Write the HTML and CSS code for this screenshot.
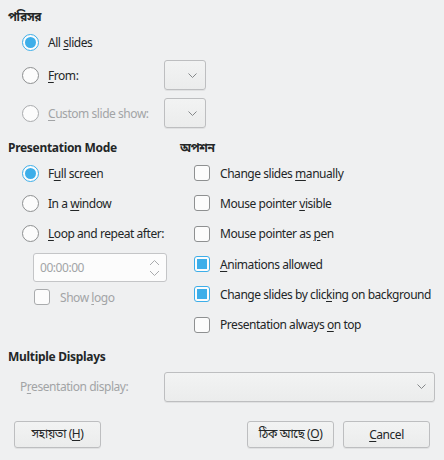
FILE: index.html
```html
<!DOCTYPE html>
<html>
<head>
<meta charset="utf-8">
<link rel="stylesheet" href="styles.css">
</head>
<body>
<div class="dialog">
  <div class="heading h-range">পরিসর</div>
  <div class="range">
    <div class="row r1">
      <span class="radio checked"></span><span class="label">All <u>s</u>lides</span>
    </div>
    <div class="row r2">
      <span class="radio"></span><span class="label"><u>F</u>rom:</span>
      <span class="combo small"><svg class="chev" viewBox="0 0 9 5"><path d="M0.5 0.5 L4.5 4.5 L8.5 0.5"/></svg></span>
    </div>
    <div class="row r3 disabled">
      <span class="radio"></span><span class="label"><u>C</u>ustom slide show:</span>
      <span class="combo small"><svg class="chev" viewBox="0 0 9 5"><path d="M0.5 0.5 L4.5 4.5 L8.5 0.5"/></svg></span>
    </div>
  </div>

  <div class="cols">
    <div class="col-left">
      <div class="heading">Presentation Mode</div>
      <div class="list">
        <div class="row line"><span class="radio checked"></span><span class="label">F<u>u</u>ll screen</span></div>
        <div class="row line"><span class="radio"></span><span class="label">In a <u>w</u>indow</span></div>
        <div class="row line"><span class="radio"></span><span class="label"><u>L</u>oop and repeat after:</span></div>
        <div class="spin">
          <span class="spin-text">00:00:00</span>
          <svg class="spin-arrows" viewBox="0 0 11 18"><path d="M1 6 L5.5 1.5 L10 6"/><path d="M1 12 L5.5 16.5 L10 12"/></svg>
        </div>
        <div class="row logo disabled"><span class="check"></span><span class="label">Show <u>l</u>ogo</span></div>
      </div>
    </div>
    <div class="col-right">
      <div class="heading">অপশন</div>
      <div class="list">
        <div class="row line"><span class="check"></span><span class="label">Change slides <u>m</u>anually</span></div>
        <div class="row line"><span class="check"></span><span class="label">Mouse pointer <u>v</u>isible</span></div>
        <div class="row line"><span class="check"></span><span class="label">Mouse pointer as <u>p</u>en</span></div>
        <div class="row line"><span class="check checked"></span><span class="label"><u>A</u>nimations allowed</span></div>
        <div class="row line"><span class="check checked"></span><span class="label">Change slides by clic<u>k</u>ing on background</span></div>
        <div class="row line"><span class="check"></span><span class="label">Presentation always <u>o</u>n top</span></div>
      </div>
    </div>
  </div>

  <div class="heading h-multi">Multiple Displays</div>
  <div class="display-row">
    <span class="display-label">P<u>r</u>esentation display:</span>
    <span class="combo wide"><svg class="chev" viewBox="0 0 9 5"><path d="M0.5 0.5 L4.5 4.5 L8.5 0.5"/></svg></span>
  </div>

  <div class="buttons">
    <button class="btn">সহায়তা (<u>H</u>)</button>
    <span class="spacer"></span>
    <button class="btn">ঠিক আছে (<u>O</u>)</button>
    <button class="btn"><u>C</u>ancel</button>
  </div>
</div>
</body>
</html>
```
FILE: styles.css
```css
* { box-sizing: border-box; }
html, body {
  margin: 0;
  background: #eff0f1;
}
body {
  font-family: "Noto Sans", "Noto Sans Bengali", "Lohit Bengali", "DejaVu Sans", sans-serif;
  font-size: 12px;
  letter-spacing: -0.45px;
  color: #232627;
  width: 444px;
  height: 460px;
  overflow: hidden;
}
u { text-decoration-thickness: 1px; text-underline-offset: 2px; }
.label, .display-label, .heading, .btn { white-space: nowrap; }
.dialog {
  padding: 8px 8px 0 8px;
  display: flex;
  flex-direction: column;
}
.heading {
  font-weight: bold;
  height: 18px;
  line-height: 18px;
  letter-spacing: -0.3px;
}
.range {
  display: flex;
  flex-direction: column;
  padding-left: 14px;
  margin-top: 1px;
}
.row {
  display: flex;
  align-items: center;
}
.range .row { height: 30px; }
.range .r2 { margin-top: 3px; }
.range .r3 { margin-top: 8px; }
.range .label { width: 116px; }
.radio {
  width: 17px;
  height: 17px;
  border-radius: 50%;
  border: 1px solid #8e9091;
  background: #fcfcfc;
  flex: none;
  margin-right: 9px;
  position: relative;
}
.radio.checked {
  border-color: #3daee9;
}
.radio.checked::after {
  content: "";
  position: absolute;
  left: 2px; top: 2px;
  width: 11px; height: 11px;
  border-radius: 50%;
  background: #3daee9;
}
.disabled .radio, .disabled .check { border-color: #a9abad; }
.disabled .label { color: #a2a4a6; }
.combo {
  display: flex;
  align-items: center;
  justify-content: flex-end;
  height: 30px;
  border: 1px solid #bdbec0;
  border-radius: 3px;
  background: linear-gradient(#f2f3f3, #ebecec);
  box-shadow: 0 1px 0 rgba(0,0,0,0.06);
  padding-right: 8px;
}
.combo.small { width: 42px; }
.chev {
  width: 9px;
  height: 5px;
  fill: none;
  stroke: #85888a;
  stroke-width: 1;
}
.cols {
  display: flex;
  margin-top: 11px;
}
.col-left { width: 172px; }
.col-right { flex: 1; }
.list {
  display: flex;
  flex-direction: column;
  padding-left: 14px;
  margin-top: 1px;
}
.row.line { height: 30px; }
.col-right .row.line { height: 30.3px; }
.spin {
  margin-left: 11px;
  margin-top: 5px;
  width: 134px;
  height: 29px;
  border: 1px solid #c4c5c7;
  border-radius: 3px;
  background: #fcfcfc;
  display: flex;
  align-items: center;
  justify-content: space-between;
  padding: 0 6px 0 6px;
}
.spin-text { color: #a2a4a6; }
.spin-arrows {
  width: 11px;
  height: 18px;
  fill: none;
  stroke: #a9abad;
  stroke-width: 1;
}
.row.logo {
  height: 30px;
  margin-left: 12px;
}
.check {
  width: 16px;
  height: 16px;
  border: 1px solid #8e9091;
  border-radius: 3px;
  background: #fcfcfc;
  flex: none;
  margin-right: 10px;
  position: relative;
}
.check.checked { border-color: #3daee9; }
.check.checked::after {
  content: "";
  position: absolute;
  left: 2px; top: 2px;
  width: 10px; height: 10px;
  background: #3daee9;
}
.h-multi { margin-top: 8px; }
.display-row {
  display: flex;
  align-items: center;
  margin-top: 6px;
}
.display-label {
  width: 156px;
  padding-left: 12px;
  color: #a2a4a6;
}
.combo.wide { width: 271px; height: 30px; }
.buttons {
  display: flex;
  margin-top: 19px;
  padding: 0 6px;
  gap: 9px;
}
.spacer { flex: 1; }
.btn {
  font: inherit;
  letter-spacing: -0.45px;
  color: #232627;
  height: 27px;
  width: 87px;
  border: 1px solid #bdbec0;
  border-radius: 3px;
  background: linear-gradient(#f2f3f3, #ebecec);
  box-shadow: 0 1px 0 rgba(0,0,0,0.06);
  padding: 0;
}
```
